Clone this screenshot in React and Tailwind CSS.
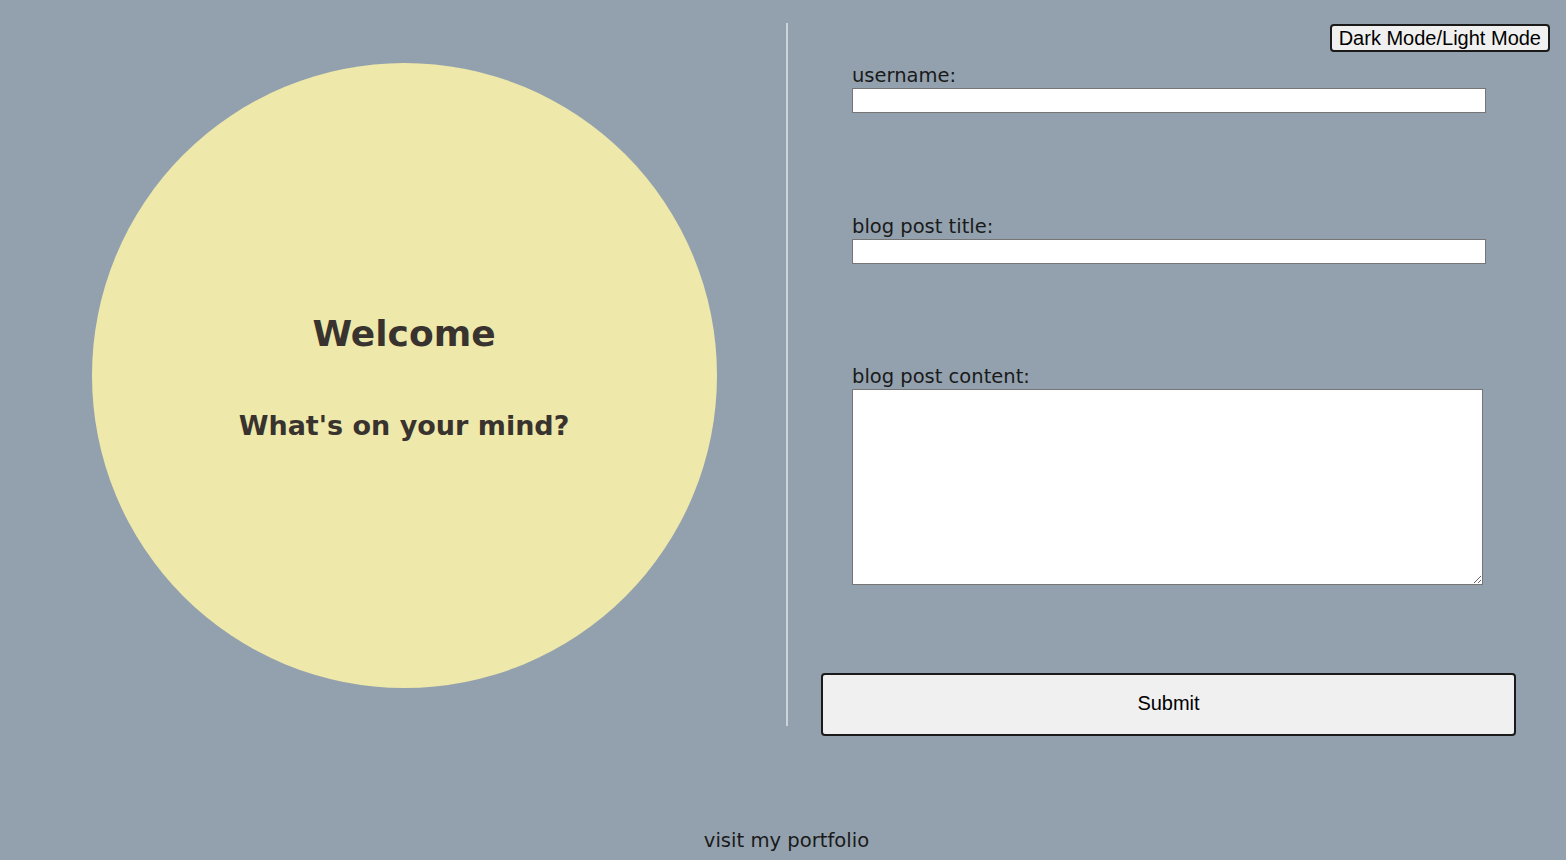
export default function App() {
  return (
    <div className="relative w-full h-[860px] bg-[#93a1ae] text-[#1a1a1a]" style={{ fontFamily: '"DejaVu Sans", sans-serif' }}>
      <button className="absolute top-[24px] right-[16px] h-[28px] px-[7px] bg-[#f0f0f0] border-2 border-[#1a1a1a] rounded-[4px] text-[20px] leading-none text-black" style={{ fontFamily: '"Liberation Sans", Arial, sans-serif' }}>
        Dark Mode/Light Mode
      </button>
      <div className="flex pt-[23px]">
        <div className="w-[786px] h-[703px] flex items-center justify-center pl-[22px] pt-[2px]">
          <div className="w-[625px] h-[625px] rounded-full bg-[#eee8aa] flex flex-col items-center justify-center text-[#38332e] pt-[3px]">
            <h1 className="text-[36px] font-bold leading-none">Welcome</h1>
            <h2 className="text-[27px] font-bold leading-none mt-[60px]">What's on your mind?</h2>
          </div>
        </div>
        <div className="w-[2px] h-[703px] bg-[#cdd3d9]"></div>
        <div className="flex-1 flex flex-col pl-[33px]">
          <div className="pl-[31px] flex flex-col">
            <label className="text-[19.5px] leading-[25px] mt-[40px]">username:</label>
            <input className="w-[634px] h-[25px] bg-white border border-[#767676]" />
            <label className="text-[19.5px] leading-[25px] mt-[101px]">blog post title:</label>
            <input className="w-[634px] h-[25px] bg-white border border-[#767676]" />
            <label className="text-[19.5px] leading-[25px] mt-[100px]">blog post content:</label>
            <textarea className="w-[631px] h-[196px] bg-white border border-[#767676]"></textarea>
          </div>
          <button className="mt-[88px] w-[695px] h-[63px] pb-[3px] bg-[#f0f0f0] border-2 border-[#1a1a1a] rounded-[4px] text-[20px] text-black" style={{ fontFamily: '"Liberation Sans", Arial, sans-serif' }}>
            Submit
          </button>
        </div>
      </div>
      <div className="absolute left-0 right-0 top-[830px] pl-[7px] text-center text-[19.6px] leading-[22px]">
        visit my portfolio
      </div>
    </div>
  );
}
